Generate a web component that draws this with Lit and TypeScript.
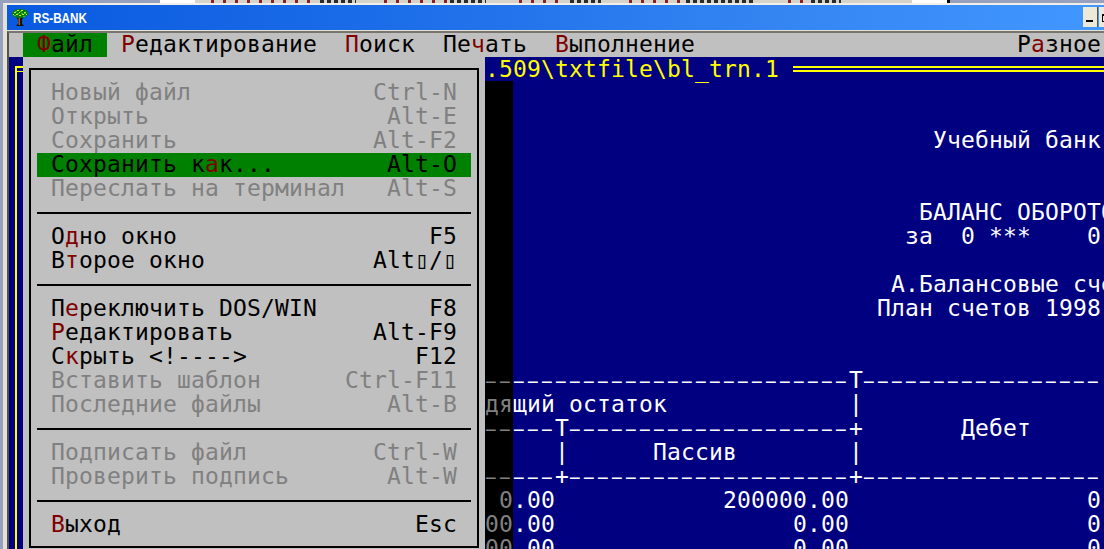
import { LitElement, html, css, nothing } from "lit";
import { customElement } from "lit/decorators.js";

type Item = { t?: string; k?: string; hot?: number; dim?: boolean; sel?: boolean; sep?: boolean };

const ITEMS: Item[] = [
  { t: "Новый файл", k: "Ctrl-N", dim: true },
  { t: "Открыть", k: "Alt-E", dim: true },
  { t: "Сохранить", k: "Alt-F2", dim: true },
  { t: "Сохранить как...", k: "Alt-O", hot: 11, sel: true },
  { t: "Переслать на терминал", k: "Alt-S", dim: true },
  { sep: true },
  { t: "Одно окно", k: "F5", hot: 1 },
  { t: "Второе окно", k: "Alt▯/▯", hot: 1 },
  { sep: true },
  { t: "Переключить DOS/WIN", k: "F8", hot: 1 },
  { t: "Редактировать", k: "Alt-F9", hot: 0 },
  { t: "Скрыть <!---->", k: "F12", hot: 1 },
  { t: "Вставить шаблон", k: "Ctrl-F11", dim: true },
  { t: "Последние файлы", k: "Alt-B", dim: true },
  { sep: true },
  { t: "Подписать файл", k: "Ctrl-W", dim: true },
  { t: "Проверить подпись", k: "Alt-W", dim: true },
  { sep: true },
  { t: "Выход", k: "Esc", hot: 0 },
];

const d = (n: number) => "−".repeat(n);
const sp = (n: number) => " ".repeat(n);

const LINES: string[] = [
  "",
  "",
  sp(32) + "Учебный банк",
  "",
  "",
  sp(31) + "БАЛАНС ОБОРОТО",
  sp(30) + "за  0 ***    0",
  "",
  sp(29) + "А.Балансовые сче",
  sp(28) + "План счетов 1998",
  "",
  "",
  d(26) + "T" + d(17),
  "дящий остаток" + sp(13) + "|",
  d(5) + "T" + d(20) + "+" + sp(7) + "Дебет",
  sp(5) + "|" + sp(6) + "Пассив" + sp(8) + "|",
  d(5) + "+" + d(20) + "+" + d(17),
  " 0.00" + sp(12) + "200000.00" + sp(17) + "0",
  "00.00" + sp(17) + "0.00" + sp(17) + "0",
  "00.00" + sp(17) + "0.00" + sp(17) + "0",
];

const SPECKS: [number, string][] = [
  [166, "#97a1bd"], [37, "#ffffff"], [7, "#d6d3ca"], [120, "red"], [40, "dark"], [20, "#d6d3ca"], [75, "red"],
  [40, "dark"], [25, "#d6d3ca"], [60, "red"], [35, "dark"], [20, "#d6d3ca"], [65, "red"], [75, "dark"],
  [25, "#d6d3ca"], [30, "red"], [35, "dark"], [73, "#d6d3ca"], [37, "#ffffff"], [3, "#000000"], [160, "#97a1bd"],
];

@customElement("app-root")
export class AppRoot extends LitElement {
  static styles = css`
    :host {
      display: block;
      width: 1104px;
      height: 549px;
      overflow: hidden;
      background: #97a1bd;
      font-family: "DejaVu Sans Mono", "Liberation Mono", monospace;
      font-size: 23px;
      letter-spacing: 0.15px;
      line-height: 22px;
    }
    .strip { display: flex; height: 3px; }
    .strip .red { background: repeating-linear-gradient(90deg, #d6d3ca 0 9px, #8c2020 9px 12px); }
    .strip .dark { background: repeating-linear-gradient(90deg, #d6d3ca 0 3px, #2b2b2b 3px 7px); }
    .window {
      margin-left: 3px;
      border-left: 4px solid #e4e1d6;
      border-top: 2px solid #f1efe8;
      height: 544px;
    }
    .titlebar {
      height: 25px;
      display: flex;
      align-items: center;
      padding-left: 5px;
      gap: 5px;
      background: linear-gradient(90deg, #0a5ae0 0%, #1f70ea 40%, #3485f2 70%, #4297ff 100%);
      color: #fff;
      font: bold 14px "Liberation Sans", Arial, sans-serif;
      letter-spacing: 0;
    }
    .titlebar svg { display: block; }
    .caption { display: inline-block; width: 54px; transform: scaleX(0.835); transform-origin: left center; white-space: nowrap; }
    .btns { margin-left: auto; display: flex; align-self: flex-end; gap: 1px; padding-bottom: 3px; margin-right: -10px; }
    .btn {
      width: 15px;
      height: 20px;
      box-sizing: border-box;
      background: #ece9d8;
      border-right: 1px solid #55534a;
      display: flex;
      padding: 7px 3px 0 3px;
    }
    .dash { width: 7px; height: 2px; background: #000; margin-top: 6px; }
    .box { width: 9px; height: 8px; box-sizing: border-box; border: 1px solid #000; border-top-width: 2px; flex: none; }
    .frame { border-top: 1px solid #e4e1d6; height: 518px; }
    .console {
      border-top: 2px solid #77756d;
      border-left: 2px solid #55534a;
      height: 516px;
      overflow: hidden;
    }
    .bar {
      height: 24px;
      background: #c0c0c0;
      color: #000;
      display: flex;
      gap: 28px;
      padding-left: 14px;
      padding-right: 3px;
    }
    .bar .on { background: #008000; padding: 0 14px; margin-right: -14px; }
    .bar .end { margin-left: auto; }
    .hot { color: #800000; }
    .body { display: flex; height: 492px; overflow: hidden; }
    .rail { width: 14px; flex: none; background: #000080; }
    .rail-line {
      margin: 9px 0 0 6px;
      height: 483px;
      border-left: 2px solid #ffff00;
      border-top: 2px solid #ffff00;
    }
    .rail-line::before {
      content: "";
      display: block;
      height: 1px;
      margin-top: 3px;
      background: #ffff00;
    }
    .drop { width: 462px; flex: none; background: #c0c0c0; padding: 11px 6px 0 6px; box-sizing: border-box; }
    .menu {
      box-sizing: border-box;
      width: 450px;
      height: 480px;
      border: 2px solid #000;
      padding: 11px 6px 10px 6px;
    }
    .row { height: 24px; display: flex; justify-content: space-between; padding: 0 14px; color: #000; white-space: pre; }
    .row.dim { color: #808080; }
    .row.sel { background: #008000; }
    .sep { height: 24px; display: flex; align-items: center; }
    .sep i { display: block; height: 2px; width: 100%; background: #000; }
    .pane { flex: 1; min-width: 0; background: #000080; color: #fff; overflow: hidden; }
    .ptitle { height: 24px; display: flex; align-items: center; color: #ffff00; }
    .ptitle .cap { width: 308px; flex: none; }
    .ptitle .dbl { flex: 1; height: 2px; border-top: 2px solid #ffff00; border-bottom: 2px solid #ffff00; }
    .line { height: 24px; display: flex; }
    .txt { white-space: pre; }
    .rule { font-size: 19px; letter-spacing: 2.56px; }
    .shade { width: 28px; flex: none; background: #000; color: #808080; overflow: hidden; white-space: pre; }
  `;

  private label(it: Item) {
    const t = it.t ?? "";
    if (it.hot === undefined) return t;
    return html`${t.slice(0, it.hot)}<span class="hot">${t[it.hot]}</span>${t.slice(it.hot + 1)}`;
  }

  private runs(s: string) {
    return s.split(/(−+)/).map((p) => (p.startsWith("−") ? html`<span class="rule">${p}</span>` : p));
  }

  render() {
    return html`
      <div class="strip">
        ${SPECKS.map(([w, c]) =>
          c === "red" || c === "dark"
            ? html`<div class=${c} style="width:${w}px"></div>`
            : html`<div style="width:${w}px;background:${c}"></div>`
        )}
      </div>
      <div class="window">
        <div class="titlebar">
          <svg width="16" height="17" viewBox="0 0 16 17">
            <path d="M4.5 8h7l-1.5 3v4l1.5 1v1H4.5v-1L6 15v-4z" fill="#1a1208" />
            <path d="M6.5 9h1.5v7H6.5z" fill="#a8601a" />
            <ellipse cx="8" cy="4.6" rx="8" ry="4.6" fill="#0f7a14" />
            <path d="M2 3h2v1H2zM5 1h2v1H5zM9 1h2v1H9zM12 3h2v1h-2zM7 3h1v1H7zM4 5h2v1H4zM10 5h2v1h-2zM7 6h2v1H7zM1 5h1v1H1zM14 5h1v1h-1z" fill="#c8ea20" />
            <path d="M3 2h2v1H3zM8 2h2v1H8zM5 4h2v1H5zM9 4h2v1H9zM12 4h2v1h-2zM2 6h2v1H2zM11 7h2v1h-2z" fill="#2fc42f" />
          </svg>
          <span class="caption">RS-BANK</span>
          <div class="btns">
            <div class="btn"><div class="dash"></div></div>
            <div class="btn"><div class="box"></div></div>
          </div>
        </div>
        <div class="frame">
          <div class="console">
            <div class="bar">
              <span class="on"><span class="hot">Ф</span>айл</span>
              <span><span class="hot">Р</span>едактирование</span>
              <span><span class="hot">П</span>оиск</span>
              <span>Пе<span class="hot">ч</span>ать</span>
              <span><span class="hot">В</span>ыполнение</span>
              <span class="end">Р<span class="hot">а</span>зное</span>
            </div>
            <div class="body">
              <div class="rail"><div class="rail-line"></div></div>
              <div class="drop">
                <div class="menu">
                  ${ITEMS.map((it) =>
                    it.sep
                      ? html`<div class="sep"><i></i></div>`
                      : html`<div class="row ${it.dim ? "dim" : ""} ${it.sel ? "sel" : ""}"><span>${this.label(it)}</span><span>${it.k ?? nothing}</span></div>`
                  )}
                </div>
              </div>
              <div class="pane">
                <div class="ptitle">
                  <span class="cap txt">.509\\txtfile\\bl_trn.1</span>
                  <span class="dbl"></span>
                </div>
                ${LINES.map(
                  (l) => html`<div class="line"><span class="shade">${this.runs(l.slice(0, 2))}</span><span class="txt">${this.runs(l.slice(2))}</span></div>`
                )}
              </div>
            </div>
          </div>
        </div>
      </div>
    `;
  }
}
